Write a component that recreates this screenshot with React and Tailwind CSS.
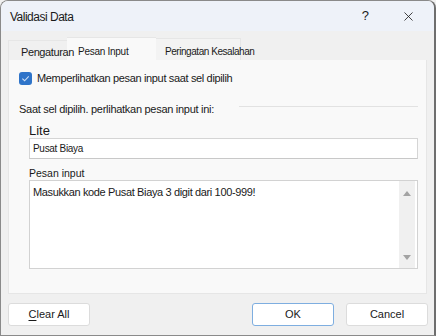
import React from "react";
import { X } from "lucide-react";

const font = { fontFamily: '"Segoe UI", "Liberation Sans", Arial, sans-serif' };

export default function App() {
  return (
    <div className="w-[436px] h-[336px] bg-[#f0f0f0]" style={font}>
      <div className="w-full h-full flex flex-col rounded-t-[8px] border border-[#8a8a8a] border-r-[#6e6e6e] border-r-2 overflow-hidden bg-[#f0f0f0]">
        {/* Title bar */}
        <div className="h-[30px] shrink-0 bg-[#eef2f9] flex items-center pl-[9px] pr-[18px]">
          <span className="text-[12px] tracking-[-0.5px] text-[#1a1a1a] flex-1 pt-[1px]">Validasi Data</span>
          <span className="text-[13px] text-[#1a1a1a] mr-[32px]">?</span>
          <X size={15} strokeWidth={1.3} className="text-[#1a1a1a]" />
        </div>

        {/* Tabs */}
        <div className="flex items-end h-[29px] pl-[7px] shrink-0">
          <div className="h-[20px] w-[59px] pl-[12px] pt-[5px] text-[11px] tracking-[-0.4px] leading-[13px] text-[#1a1a1a] border-t border-l border-[#e6e6e6] whitespace-nowrap relative z-10">
            Pengaturan
          </div>
          <div className="h-[23px] w-[89px] pl-[11px] pt-[8px] bg-[#f9f9f9] border-t border-[#e6e6e6] text-[10px] tracking-[-0.27px] leading-[12px] text-[#1a1a1a] whitespace-nowrap">
            Pesan Input
          </div>
          <div className="h-[22px] w-[85px] pl-[9px] pt-[7px] bg-[#f3f3f3] border-t border-r border-[#e6e6e6] text-[10px] tracking-[-0.45px] leading-[12px] text-[#1a1a1a] whitespace-nowrap">
            Peringatan Kesalahan
          </div>
        </div>

        {/* Panel */}
        <div className="mx-[7px] h-[234px] bg-[#f9f9f9] border border-t-0 border-[#e6e6e6] pl-[10px] pr-[8px] pt-[12px] shrink-0">
          <div className="flex items-center gap-[5px] h-[13px]">
            <div className="w-[13px] h-[13px] rounded-[3px] bg-[#2f74c9] flex items-center justify-center">
              <svg width="9" height="9" viewBox="0 0 10 10">
                <path d="M1.5 5.2 L4 7.5 L8.6 2.6" fill="none" stroke="#cfe0f5" strokeWidth="1.2" />
              </svg>
            </div>
            <span className="text-[11px] tracking-[-0.35px] leading-[13px] text-[#1a1a1a] whitespace-nowrap">Memperlihatkan pesan input saat sel dipilih</span>
          </div>

          <div className="flex items-center mt-[17px] h-[14px]">
            <span className="text-[11px] tracking-[-0.28px] leading-[14px] text-[#1a1a1a] whitespace-nowrap">Saat sel dipilih. perlihatkan pesan input ini:</span>
            <div className="flex-1 h-px bg-[#e2e2e2] ml-[25px] mt-[-6px]" />
          </div>

          <div className="pl-[10px] mt-[7px]">
            <div className="text-[13px] leading-[15px] text-[#1a1a1a]">Lite</div>
            <div className="h-[21px] bg-white border border-[#d5d5d5] border-b-[#c8c8c8] pl-[3px] flex items-center text-[10px] tracking-[-0.3px] text-[#1a1a1a]">
              Pusat Biaya
            </div>

            <div className="text-[10.5px] leading-[14px] text-[#1a1a1a] mt-[7px]">Pesan input</div>
            <div className="h-[89px] bg-white border border-[#d2d2d2] flex">
              <div className="flex-1 pl-[3px] pt-[5px] text-[11px] tracking-[-0.36px] leading-[13px] text-[#1a1a1a]">
                Masukkan kode Pusat Biaya 3 digit dari 100-999!
              </div>
              <div className="w-[16px] mr-[2px] bg-[#f0f0f0] flex flex-col items-center justify-between pt-[10px] pb-[8px]">
                <svg width="8" height="5" viewBox="0 0 8 5">
                  <path d="M0 5 L4 0 L8 5 Z" fill="#a3a3a3" />
                </svg>
                <svg width="8" height="5" viewBox="0 0 8 5">
                  <path d="M0 0 L4 5 L8 0 Z" fill="#a3a3a3" />
                </svg>
              </div>
            </div>
          </div>
        </div>

        {/* Buttons */}
        <div className="flex items-center pl-[7px] pr-[6px] pt-[9px]">
          <button className="w-[82px] h-[23px] bg-white border border-[#dcdcdc] rounded-[3px] text-[11px] text-[#1a1a1a]">
            <span className="underline underline-offset-2">C</span>lear All
          </button>
          <div className="flex-1" />
          <button className="w-[82px] h-[23px] bg-white border border-[#7eaee0] rounded-[3px] text-[11px] text-[#1a1a1a]">
            OK
          </button>
          <button className="w-[82px] h-[23px] ml-[12px] bg-white border border-[#dcdcdc] rounded-[3px] text-[11px] text-[#1a1a1a]">
            Cancel
          </button>
        </div>
      </div>
    </div>
  );
}
